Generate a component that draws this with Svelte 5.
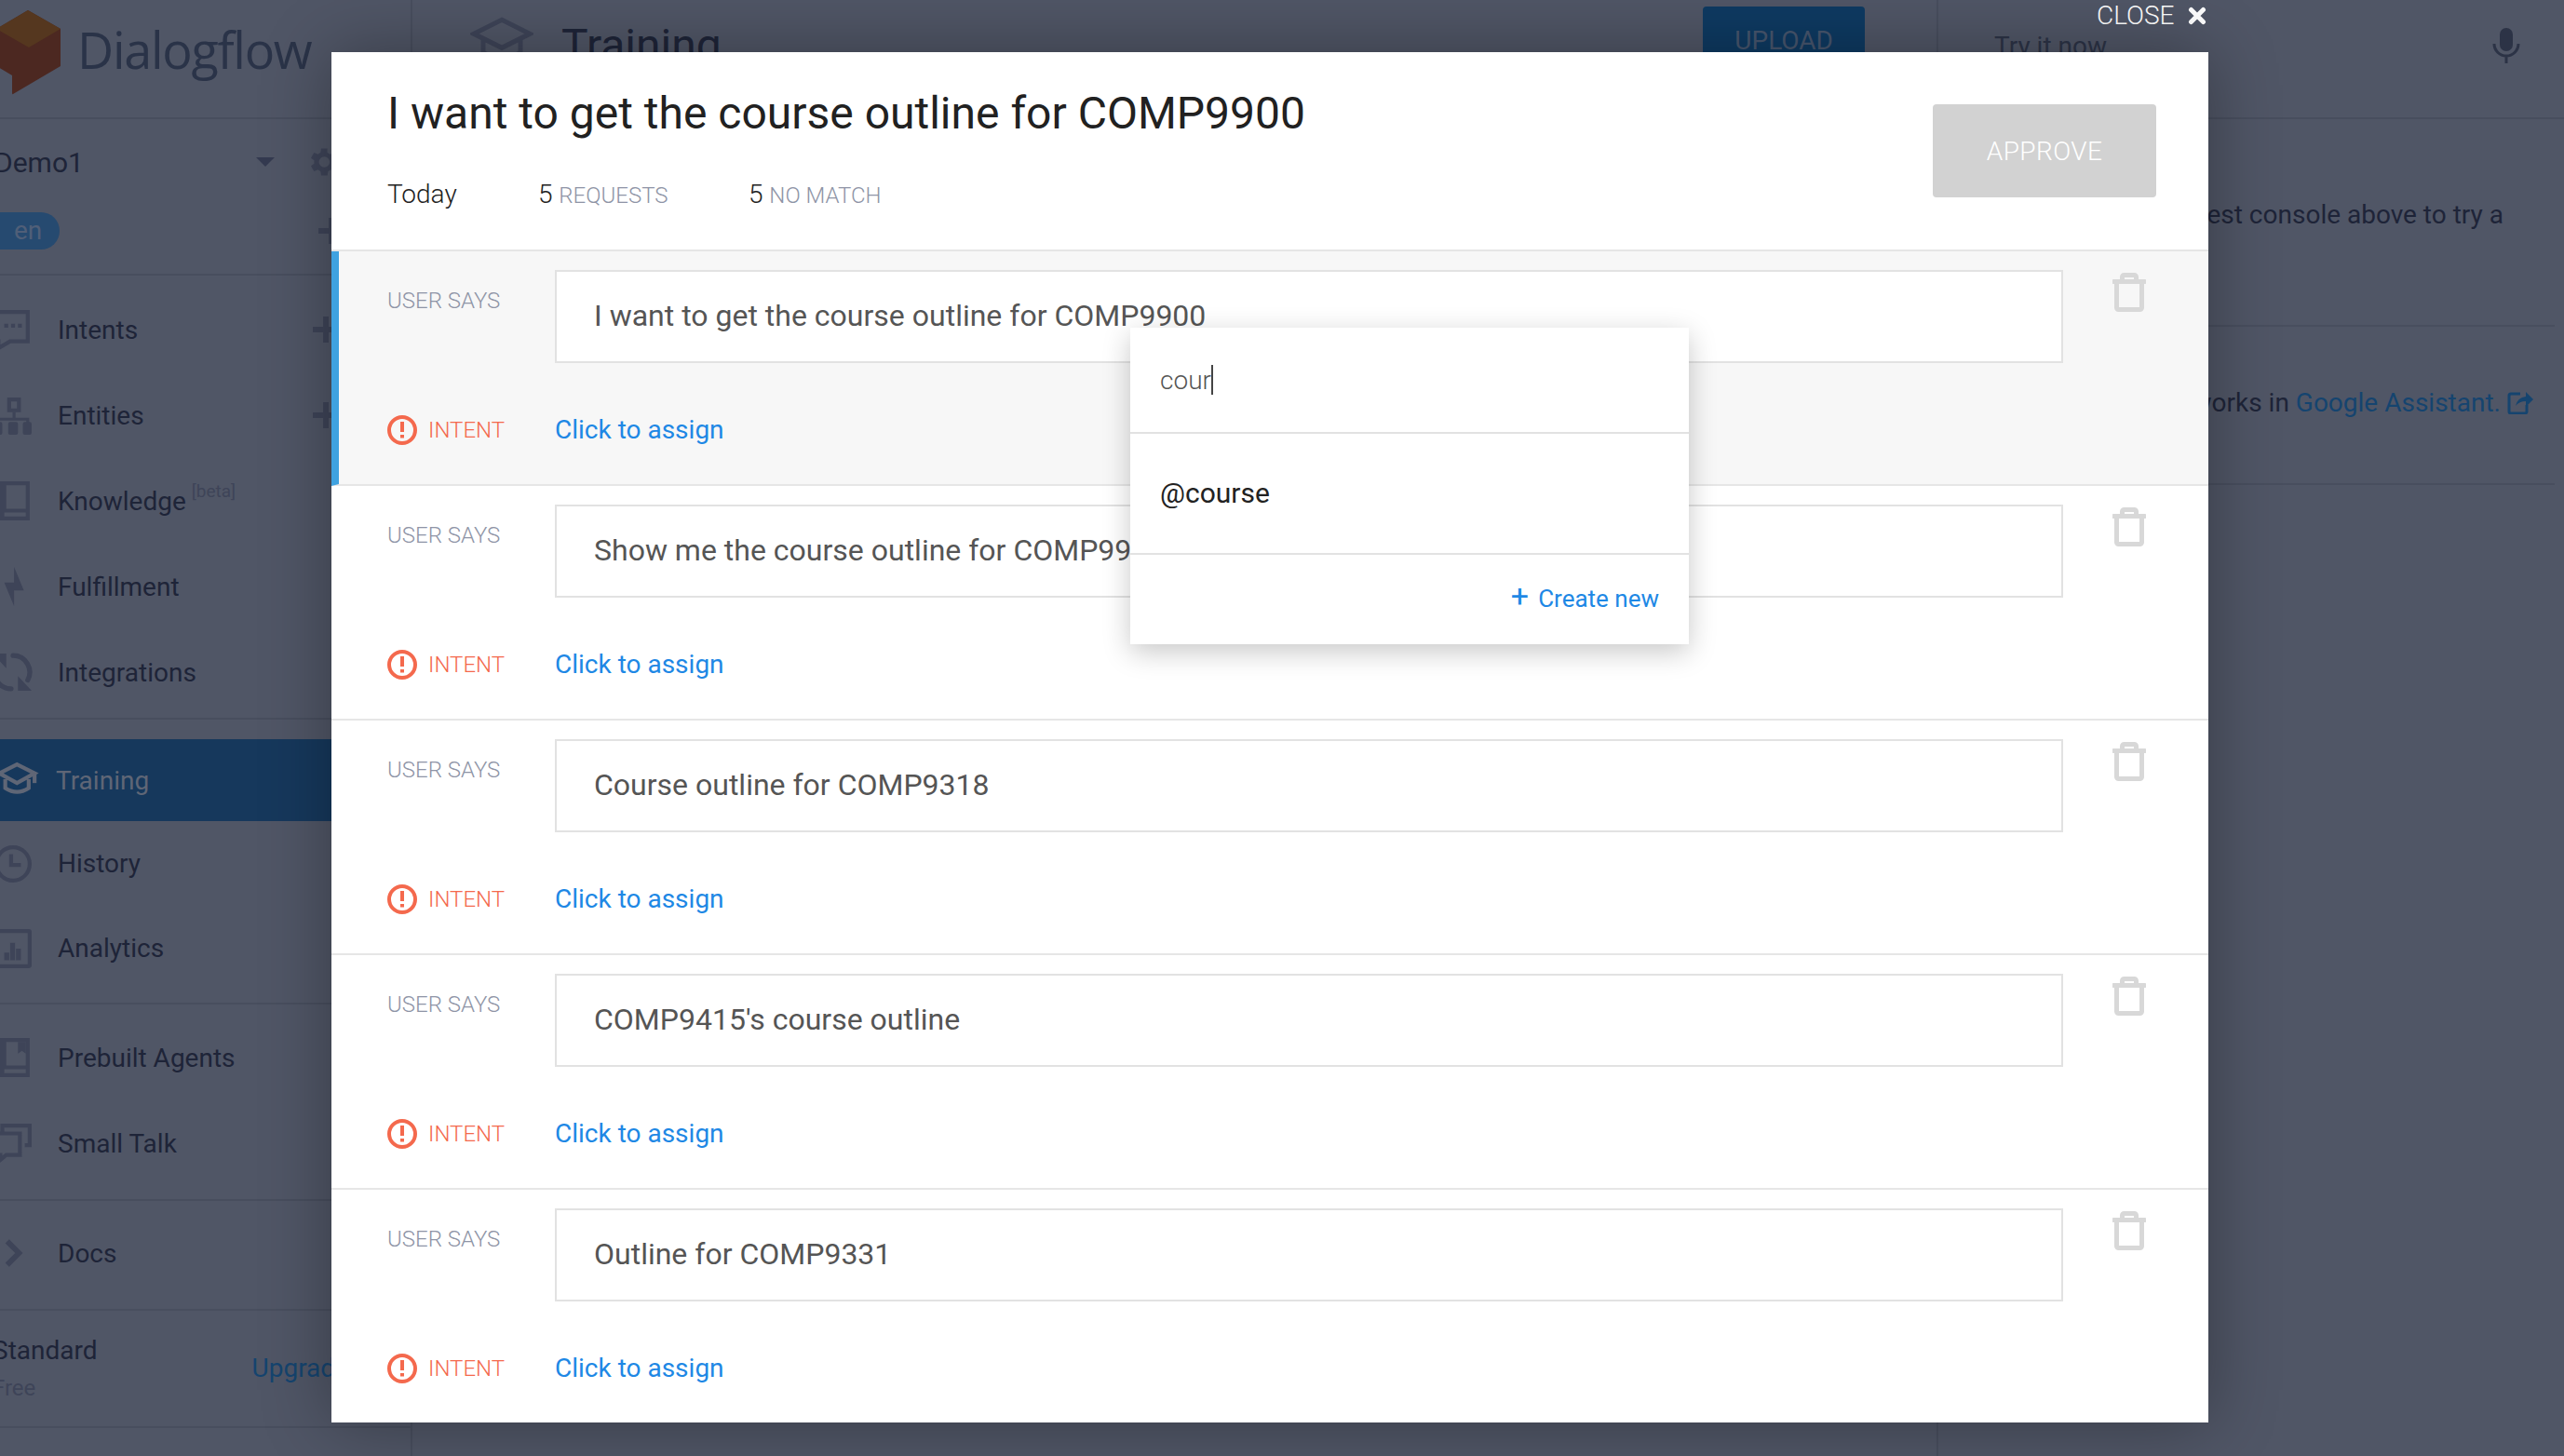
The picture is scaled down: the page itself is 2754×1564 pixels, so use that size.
<script>
    const rows = [
        'I want to get the course outline for COMP9900',
        'Show me the course outline for COMP9900',
        'Course outline for COMP9318',
        "COMP9415's course outline",
        'Outline for COMP9331'
    ]
</script>

<div class="page">
    <aside class="sidebar">
        <div class="logo">
            <svg class="cube" width="70" height="92" viewBox="0 0 70 92">
                <path d="M34 0 L69 20 L69 60 L18 90 Q17 91 17 88 L17 70 L0 60 L0 20 Z" fill="#4c2821" />
                <path d="M34 0 L69 20 L35 40 L0 20 Z" fill="#55371f" />
            </svg>
            <span class="brand">Dialogflow</span>
        </div>

        <div class="agent">
            <div class="agent-row">
                <span class="agent-name">Demo1</span>
                <span class="caret"></span>
                <svg class="gear" width="40" height="40" viewBox="0 0 24 24"><path d="M19.4 13a7.5 7.5 0 0 0 0-2l2.1-1.6-2-3.4-2.5 1a7.500 7.500 0 0 0-1.700-1L15.400 3.300h-4l-.4 2.700a7.500 7.500 0 0 0-1.700 1l-2.500-1-2 3.400L6.900 11a7.500 7.500 0 0 0 0 2l-2.100 1.600 2 3.400 2.500-1a7.500 7.500 0 0 0 1.700 1l.4 2.700h4l.4-2.700a7.500 7.500 0 0 0 1.700-1l2.500 1 2-3.400zM13.400 15.500a3.500 3.500 0 1 1 0-7 3.500 3.500 0 0 1 0 7z" fill="#3e4458" /></svg>
            </div>
            <div class="lang-row">
                <span class="pill">en</span>
                <span class="plus lang-plus"></span>
            </div>
        </div>

        <nav class="group first">
            <div class="item">
                <svg class="icon" viewBox="0 0 40 40"><path d="M4 2h32v30H18l-12 7v-7H4z" fill="none" stroke="#3e4458" stroke-width="4" /><path d="M12 14h4v4h-4zM19 14h4v4h-4zM26 14h4v4h-4z" fill="#3e4458" /></svg>
                <span>Intents</span><span class="plus"></span>
            </div>
            <div class="item">
                <svg class="icon" viewBox="0 0 40 40"><path d="M15 2h14v15h-14zM19 6v7h6v-7z" fill="#3e4458" fill-rule="evenodd" /><path d="M22 17v8M5 29v-5h31v5" fill="none" stroke="#3e4458" stroke-width="3" /><rect x="0" y="27" width="10" height="13" rx="2" fill="#3e4458" /><rect x="16" y="27" width="10" height="13" rx="2" fill="#3e4458" /><rect x="31" y="27" width="9" height="13" rx="2" fill="#3e4458" /></svg>
                <span>Entities</span><span class="plus"></span>
            </div>
            <div class="item">
                <svg class="icon" viewBox="0 0 40 40"><path transform="translate(6 0)" d="M2 0h30v40H2a2 2 0 0 1-2-2V2a2 2 0 0 1 2-2zM8 4v24h20V4zM6 32v4h22v-4z" fill="#3e4458" fill-rule="evenodd" /></svg>
                <span>Knowledge</span><sup class="beta">[beta]</sup>
            </div>
            <div class="item">
                <svg class="icon" viewBox="0 0 40 40"><path transform="translate(8 0)" d="M14 0v16H4l10 24V24h10z" fill="#3e4458" /></svg>
                <span>Fulfillment</span>
            </div>
            <div class="item">
                <svg class="icon" viewBox="0 0 40 40"><path d="M21 3A17 17 0 0 1 36 28M19 37A17 17 0 0 1 4 12" fill="none" stroke="#3e4458" stroke-width="5" stroke-linecap="round" /><path d="M26 24L40 39H26zM14 16L0 1H14z" fill="#3e4458" /></svg>
                <span>Integrations</span>
            </div>
        </nav>

        <nav class="group second">
            <div class="item active">
                <svg class="icon" viewBox="0 0 40 40"><g transform="translate(6 0)"><path d="M19 4L37 13 19 23 1 13zM7 19v9q12 8 24 0v-9" fill="none" stroke="#5f6676" stroke-width="4" /><path d="M37 13v10" stroke="#5f6676" stroke-width="4" /></g></svg>
                <span>Training</span>
            </div>
            <div class="item short">
                <svg class="icon" viewBox="0 0 40 40"><circle cx="21" cy="20" r="17" fill="none" stroke="#3e4458" stroke-width="4" /><path d="M19 10v11h10" fill="none" stroke="#3e4458" stroke-width="4" /></svg>
                <span>History</span>
            </div>
            <div class="item short">
                <svg class="icon" viewBox="0 0 40 40"><rect x="4" y="2" width="34" height="36" rx="1" fill="none" stroke="#3e4458" stroke-width="4" /><path d="M12 24h5v8h-5zM18 14h5v18h-5zM24 20h5v12h-5z" fill="#3e4458" /></svg>
                <span>Analytics</span>
            </div>
        </nav>

        <nav class="group">
            <div class="item">
                <svg class="icon" viewBox="0 0 40 40"><g transform="translate(6 0)"><path d="M2 0h30v40H2a2 2 0 0 1-2-2V2a2 2 0 0 1 2-2zM8 4v24h20V4zM6 32v4h22v-4z" fill="#3e4458" fill-rule="evenodd" /><path d="M20 4h8v12l-4-3-4 3z" fill="#3e4458" /></g></svg>
                <span>Prebuilt Agents</span>
            </div>
            <div class="item">
                <svg class="icon" viewBox="0 0 40 40"><path d="M10 8V2h28v20h-5M2 10h26v22H14l-6 5v-5H2z" fill="none" stroke="#3e4458" stroke-width="4" /></svg>
                <span>Small Talk</span>
            </div>
        </nav>

        <nav class="group docs">
            <div class="item">
                <svg class="icon" viewBox="0 0 40 40"><path d="M15 8l12 12-12 12" fill="none" stroke="#3e4458" stroke-width="5.500" /></svg>
                <span>Docs</span>
            </div>
        </nav>

        <div class="plan">
            <div class="plan-info">
                <span class="plan-name">Standard</span>
                <span class="plan-kind">Free</span>
            </div>
            <span class="upgrade">Upgrade</span>
        </div>
    </aside>

    <main class="main">
        <div class="main-head">
            <svg width="68" height="50" viewBox="0 0 40 30"><path d="M20 2L38 11 20 20 2 11zM8 15v8q12 8 24 0v-8" fill="none" stroke="#3e4458" stroke-width="3" /></svg>
            <span class="main-title">Training</span>
            <span class="upload">UPLOAD</span>
        </div>
    </main>

    <section class="console">
        <div class="try-row">
            <span class="try">Try it now</span>
            <svg width="32" height="38" viewBox="0 0 32 38"><rect x="9" y="0" width="14" height="25" rx="7" fill="#2c3346" /><path d="M3 17a13 13 0 0 0 26 0M16 30v8" fill="none" stroke="#2c3346" stroke-width="3" /></svg>
        </div>
        <div class="console-msg first-msg">Please use the test console above to try a</div>
        <div class="console-msg last-msg">
            <span>See how it works in <span class="ga">Google Assistant.</span></span>
            <svg width="28" height="26" viewBox="0 0 28 26"><path d="M14 4H4a2 2 0 0 0-2 2v17a2 2 0 0 0 2 2h15a2 2 0 0 0 2-2v-7" fill="none" stroke="#15446f" stroke-width="3" /><path d="M9 17q2-9 11-10V2l8 8-8 8v-6q-7 0-11 5z" fill="#15446f" /></svg>
        </div>
    </section>

    <div class="close">CLOSE
        <svg width="20" height="20" viewBox="0 0 20 20"><path d="M3.500 3.500l13 13M16.500 3.500l-13 13" stroke="#fff" stroke-width="5" stroke-linecap="round" /></svg>
    </div>

    <div class="modal">
        <header class="modal-head">
            <div>
                <h1>I want to get the course outline for COMP9900</h1>
                <div class="stats">
                    <span class="today">Today</span>
                    <span class="stat">5 <em>REQUESTS</em></span>
                    <span class="stat">5 <em>NO MATCH</em></span>
                </div>
            </div>
            <button class="approve">APPROVE</button>
        </header>

        {#each rows as text, i}
            <div class="row" class:selected={i === 0}>
                <div class="says">
                    <span class="label">USER SAYS</span>
                    <div class="text-box">{text}</div>
                    <svg class="trash" width="36" height="42" viewBox="0 0 36 42">
                        <path d="M1.500 9.500h33M4.500 9.500v28a2 2 0 0 0 2 2h23a2 2 0 0 0 2-2v-28M10.500 9.500v-5a2 2 0 0 1 2-2h11a2 2 0 0 1 2 2v5" fill="none" stroke="#d8d8d8" stroke-width="5" stroke-linecap="round" />
                    </svg>
                </div>
                <div class="assign">
                    <span class="intent">
                        <svg width="32" height="32" viewBox="0 0 32 32"><circle cx="16" cy="16" r="14" fill="none" stroke="#f4694d" stroke-width="4" /><path d="M14 7h4v11h-4zM14 21h4v3.500h-4z" fill="#f4694d" /></svg>
                        INTENT
                    </span>
                    <span class="link">Click to assign</span>
                </div>
            </div>
        {/each}

        <div class="picker">
            <div class="picker-input">cour<span class="cursor"></span></div>
            <div class="picker-item">@course</div>
            <div class="picker-foot"><span class="create-plus">+</span>Create new</div>
        </div>
    </div>
</div>

<style>
    :global(body) {
        margin: 0;
        font-family: Roboto, "Liberation Sans", sans-serif;
    }

    .page {
        position: relative;
        display: flex;
        width: 2754px;
        height: 1564px;
        overflow: hidden;
        background: #505666;
        color: #1e2438;
        font-size: 28px;
    }

    .sidebar {
        flex: none;
        width: 463px;
        margin-left: -20px;
        border-right: 2px solid #484e5e;
        box-sizing: border-box;
    }

    .logo {
        display: flex;
        align-items: center;
        gap: 17px;
        height: 128px;
        padding-left: 16px;
        box-sizing: border-box;
        border-bottom: 2px solid #484e5e;
    }
    .cube {
        margin-bottom: 12px;
        flex: none;
    }
    .brand {
        margin-bottom: 20px;
        font-family: "Open Sans", sans-serif;
        font-size: 54px;
        letter-spacing: -1.3px;
        color: #2a3348;
    }

    .agent {
        height: 168px;
        box-sizing: border-box;
        border-bottom: 2px solid #484e5e;
        padding-left: 14px;
    }
    .agent-row {
        display: flex;
        align-items: center;
        height: 92px;
        font-size: 30px;
    }
    .agent-name {
        width: 281px;
    }
    .caret {
        width: 0;
        height: 0;
        border-left: 10px solid transparent;
        border-right: 10px solid transparent;
        border-top: 10px solid #343a50;
    }
    .gear {
        margin-left: 31px;
    }
    .lang-row {
        display: flex;
        align-items: center;
        margin-top: 8px;
    }
    .pill {
        width: 84px;
        margin-left: -14px;
        padding-left: 35px;
        box-sizing: border-box;
        height: 40px;
        line-height: 40px;
        border-radius: 20px;
        background: #264a70;
        color: #505f78;
    }
    .plus {
        position: relative;
        width: 28px;
        height: 28px;
        margin-left: auto;
        margin-right: 77px;
    }
    .plus::before,
    .plus::after {
        content: '';
        position: absolute;
        background: #3e4458;
    }
    .plus::before {
        left: 0;
        right: 0;
        top: 11px;
        height: 6px;
    }
    .plus::after {
        top: 0;
        bottom: 0;
        left: 11px;
        width: 6px;
    }
    .lang-plus {
        margin-right: 71px;
    }

    .group {
        padding: 11px 0 14px;
        border-bottom: 2px solid #484e5e;
    }
    .group.first {
        padding: 12px 0 3px;
    }
    .group.second {
        padding: 21px 0 13px;
    }
    .group.docs {
        padding-top: 10px;
    }

    .item {
        display: flex;
        align-items: center;
        height: 92px;
        padding-left: 12px;
    }
    .item.short {
        height: 91px;
    }
    .item.active {
        height: 88px;
        background: #16385c;
        color: #5f6676;
    }
    .icon {
        flex: none;
        width: 42px;
        height: 42px;
        margin-right: 28px;
        overflow: visible;
    }
    .active .icon {
        margin-right: 26px;
    }
    .beta {
        align-self: flex-start;
        margin: 24px 0 0 6px;
        font-size: 19px;
        color: #3e4458;
    }

    .plan {
        display: flex;
        align-items: center;
        justify-content: space-between;
        height: 126px;
        padding: 0 0 2px 12px;
        box-sizing: border-box;
        border-bottom: 2px solid #484e5e;
    }
    .plan-info {
        display: flex;
        flex-direction: column;
        gap: 10px;
    }
    .plan-kind {
        font-size: 24px;
        color: #3e4458;
    }
    .upgrade {
        margin-right: 66px;
        color: #15446f;
    }

    .main {
        flex: 1;
    }
    .main-head {
        display: flex;
        align-items: center;
        gap: 30px;
        height: 86px;
        padding: 0 77px 0 62px;
    }
    .main-title {
        font-size: 48px;
        margin-top: 10px;
    }
    .upload {
        margin-left: auto;
        padding: 20px 34px;
        background: #0e3a62;
        border-radius: 4px;
        color: #47566e;
    }

    .console {
        flex: none;
        width: 674px;
        border-left: 2px solid #484e5e;
        box-sizing: border-box;
    }
    .try-row {
        display: flex;
        align-items: center;
        justify-content: space-between;
        height: 128px;
        padding: 0 46px 28px 60px;
        box-sizing: border-box;
        border-bottom: 2px solid #484e5e;
        color: #2c3346;
    }
    .console-msg {
        display: flex;
        align-items: center;
        justify-content: flex-end;
        gap: 7px;
        margin-right: 10px;
        box-sizing: border-box;
        border-bottom: 2px solid #484e5e;
        white-space: pre;
        padding-right: 55px;
    }
    .first-msg {
        height: 223px;
        padding-bottom: 16px;
    }
    .last-msg {
        height: 170px;
        padding-right: 23px;
        padding-bottom: 6px;
    }
    .ga {
        color: #15446f;
    }

    .close {
        position: absolute;
        top: 0;
        left: 2252px;
        display: flex;
        align-items: center;
        gap: 14px;
        color: #fff;
        font-weight: 300;
    }

    .modal {
        position: absolute;
        left: 356px;
        top: 56px;
        width: 2016px;
        height: 1472px;
        overflow: hidden;
        background: #fff;
        color: #222;
    }
    .page::after {
        content: '';
        position: absolute;
        left: 356px;
        top: 56px;
        width: 2016px;
        height: 1472px;
        box-shadow: 0 0 70px rgba(0, 0, 0, .32);
        pointer-events: none;
    }

    .modal-head {
        display: flex;
        justify-content: space-between;
        height: 214px;
        padding: 0 56px 0 60px;
        box-sizing: border-box;
        border-bottom: 2px solid #e6e6e6;
    }
    h1 {
        margin: 36px 0 0;
        font-size: 48px;
        font-weight: 400;
        line-height: 60px;
        color: #212121;
    }
    .stats {
        display: flex;
        margin-top: 40px;
        font-weight: 300;
        font-size: 28px;
    }
    .today {
        width: 162px;
    }
    .stat {
        width: 226px;
    }
    .stat em {
        font-style: normal;
        font-size: 24px;
        color: #8e94a6;
    }
    .approve {
        width: 240px;
        height: 100px;
        margin-top: 56px;
        border: 0;
        border-radius: 4px;
        background: #d2d2d2;
        color: #fff;
        font-family: inherit;
        font-size: 28px;
        font-weight: 300;
        letter-spacing: .4px;
    }

    .row {
        height: 252px;
        padding: 20px 0 0 60px;
        box-sizing: border-box;
        border-bottom: 2px solid #e6e6e6;
    }
    .row.selected {
        padding-left: 52px;
        border-left: 8px solid #3fa2e0;
        background: #f7f7f7;
    }
    .says {
        display: flex;
    }
    .label {
        width: 180px;
        margin-top: 19px;
        font-size: 24px;
        font-weight: 300;
        line-height: 28px;
        color: #8e94a6;
    }
    .text-box {
        width: 1620px;
        height: 100px;
        padding-left: 40px;
        box-sizing: border-box;
        border: 2.500px solid #e2e2e2;
        background: #fff;
        font-size: 32px;
        line-height: 95px;
        color: #555;
    }
    .trash {
        margin: 3px 0 0 53px;
    }

    .assign {
        display: flex;
        align-items: center;
        margin-top: 55px;
    }
    .intent {
        display: flex;
        align-items: center;
        gap: 12px;
        width: 180px;
        font-size: 24px;
        font-weight: 300;
        color: #f4694d;
    }
    .link {
        font-size: 28px;
        color: #1e88e5;
    }

    .picker {
        position: absolute;
        left: 858px;
        top: 296px;
        width: 600px;
        height: 340px;
        background: #fff;
        box-shadow: 0 8px 28px rgba(0, 0, 0, .22);
    }
    .picker-input {
        display: flex;
        align-items: center;
        height: 114px;
        padding-left: 32px;
        box-sizing: border-box;
        border-bottom: 2px solid #e2e2e2;
        font-size: 28px;
        font-weight: 300;
        color: #555;
    }
    .cursor {
        width: 2px;
        height: 32px;
        background: #444;
    }
    .picker-item {
        height: 130px;
        padding-left: 32px;
        box-sizing: border-box;
        border-bottom: 2px solid #e2e2e2;
        font-size: 30px;
        line-height: 128px;
        color: #222;
    }
    .picker-foot {
        height: 96px;
        padding-right: 32px;
        text-align: right;
        font-size: 26px;
        line-height: 88px;
        color: #1e88e5;
    }
    .create-plus {
        margin-right: 10px;
        font-size: 34px;
    }
</style>
